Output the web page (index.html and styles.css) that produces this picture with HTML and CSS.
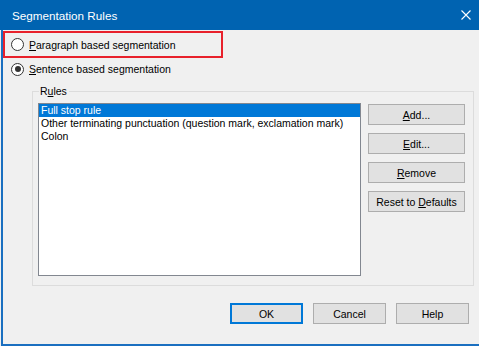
FILE: index.html
```html
<!DOCTYPE html>
<html>
<head>
  <title>Segmentation Rules</title>
  <link rel="stylesheet" href="styles.css">
</head>
<body>
  <div class="dialog">
    <div class="titlebar">
      <span class="title">Segmentation Rules</span>
      <svg class="close" width="10" height="10" viewBox="0 0 10 10">
        <path d="M0.5 0.5 L9.5 9.5 M9.5 0.5 L0.5 9.5" stroke="#ffffff" stroke-width="1.1" fill="none"/>
      </svg>
    </div>
    <div class="content">
      <div class="option highlight">
        <span class="radio"></span>
        <span class="label"><u>P</u>aragraph based segmentation</span>
      </div>
      <div class="option">
        <span class="radio checked"></span>
        <span class="label"><u>S</u>entence based segmentation</span>
      </div>
      <fieldset class="group">
        <legend>R<u>u</u>les</legend>
        <div class="group-body">
          <ul class="listbox">
            <li class="selected">Full stop rule</li>
            <li>Other terminating punctuation (question mark, exclamation mark)</li>
            <li>Colon</li>
          </ul>
          <div class="side-buttons">
            <button><u>A</u>dd...</button>
            <button><u>E</u>dit...</button>
            <button><u>R</u>emove</button>
            <button>Reset to <u>D</u>efaults</button>
          </div>
        </div>
      </fieldset>
      <div class="footer">
        <button class="default">OK</button>
        <button>Cancel</button>
        <button>Help</button>
      </div>
    </div>
  </div>
</body>
</html>
```

FILE: styles.css
```css
body {
  margin: 0;
  padding: 0;
  background: #f0f0f0;
  font-family: "Liberation Sans", Arial, sans-serif;
  font-size: 10.5px;
  color: #000000;
}

.dialog {
  width: 479px;
  height: 346px;
  box-sizing: border-box;
  display: flex;
  flex-direction: column;
}

.titlebar {
  height: 30px;
  background: #0063b1;
  display: flex;
  align-items: center;
  justify-content: space-between;
  padding: 0 8px 0 12px;
  flex-shrink: 0;
}

.title {
  color: #ffffff;
  font-size: 11.7px;
}

.close {
  display: block;
}

.content {
  flex-grow: 1;
  margin-left: 1px;
  border-left: 2px solid #1a6fc0;
  border-bottom: 2px solid #1a6fc0;
  display: flex;
  flex-direction: column;
}

.option {
  display: flex;
  align-items: center;
  height: 22px;
  padding-left: 8px;
}

.option.highlight {
  margin-top: 1px;
  width: 210px;
  height: 23px;
  padding-left: 6px;
  border: 2px solid #e8212b;
}

.radio {
  width: 11px;
  height: 11px;
  border: 1px solid #333333;
  border-radius: 50%;
  background: #ffffff;
  position: relative;
  margin-right: 5px;
  flex-shrink: 0;
}

.radio.checked::after {
  content: "";
  position: absolute;
  left: 2.5px;
  top: 2.5px;
  width: 6px;
  height: 6px;
  border-radius: 50%;
  background: #333333;
}

.group {
  margin: 5px 5px 0 29px;
  padding: 0 0 9px 0;
  border: 1px solid #dcdcdc;
  min-width: 0;
}

.group legend {
  margin-left: 6px;
  padding: 0 2px 0 1px;
  line-height: 13px;
}

.group-body {
  display: flex;
  padding: 5px 6px 0 5px;
}

.listbox {
  list-style: none;
  margin: 0;
  padding: 0;
  width: 323px;
  height: 173px;
  box-sizing: border-box;
  border: 1px solid #828790;
  background: #ffffff;
  flex-shrink: 0;
}

.listbox li {
  height: 13px;
  line-height: 13px;
  padding-left: 2px;
  white-space: nowrap;
}

.listbox li.selected {
  background: #0078d7;
  color: #ffffff;
}

.side-buttons {
  display: flex;
  flex-direction: column;
  gap: 8px;
  margin: 1px 0 0 7px;
}

button {
  font-family: "Liberation Sans", Arial, sans-serif;
  font-size: 10.5px;
  color: #000000;
  background: #e1e1e1;
  border: 1px solid #adadad;
  height: 21px;
  padding: 0;
  margin: 0;
}

.side-buttons button {
  width: 97px;
}

.footer {
  display: flex;
  justify-content: flex-end;
  gap: 10px;
  margin-top: 17px;
  padding-right: 10px;
}

.footer button {
  width: 73px;
}

.footer button.default {
  border: 2px solid #0078d7;
}
```
